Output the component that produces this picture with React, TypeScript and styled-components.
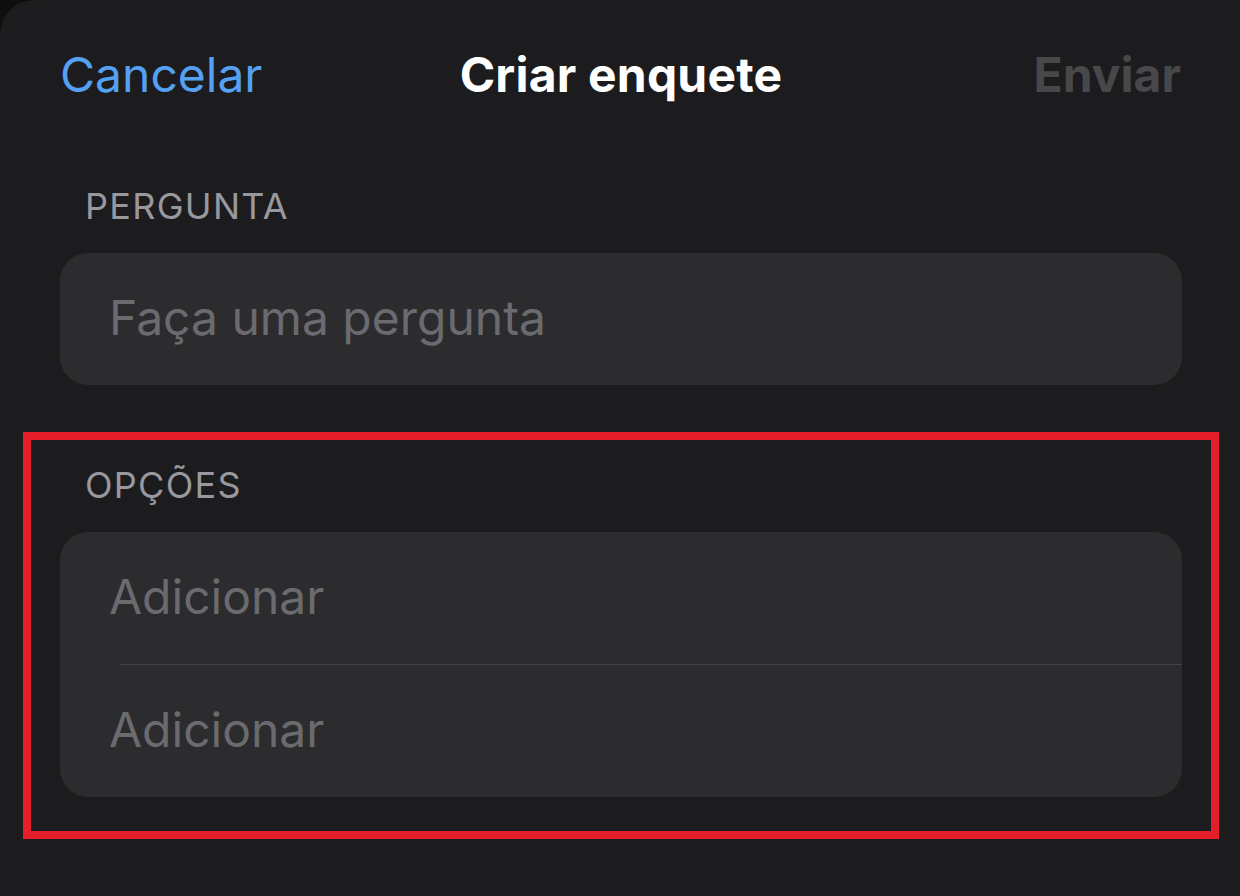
import React from 'react';
import styled, { createGlobalStyle } from 'styled-components';

const GlobalStyle = createGlobalStyle`
    html, body {
        margin: 0;
        padding: 0;
        background: #0e0e0f;
    }
    body {
        font-family: Inter, "Noto Sans", "Liberation Sans", sans-serif;
        -webkit-font-smoothing: antialiased;
    }
`;

const Sheet = styled.div`
    width: 1240px;
    height: 896px;
    box-sizing: border-box;
    background: #1c1c1e;
    border-top-left-radius: 34px;
    padding: 0 58px 0 60px;
    overflow: hidden;
`;

const NavBar = styled.header`
    display: grid;
    grid-template-columns: 1fr auto 1fr;
    align-items: center;
    padding: 46px 0 0;
    margin: 0 0 80px;
    font-size: 48px;
    line-height: 58px;
`;

const NavButton = styled.span<{ $bold?: boolean; $color: string; $align: 'left' | 'right' }>`
    color: ${p => p.$color};
    font-weight: ${p => (p.$bold ? 700 : 400)};
    justify-self: ${p => (p.$align === 'left' ? 'start' : 'end')};
    padding: ${p => (p.$align === 'left' ? '0 0 0 0' : '0 1px 0 0')};
`;

const Title = styled.h1`
    margin: 0;
    font-size: 48px;
    line-height: 58px;
    font-weight: 700;
    color: #ffffff;
    letter-spacing: 0.2px;
`;

const Section = styled.section<{ $highlight?: boolean }>`
    display: flex;
    flex-direction: column;
    ${p =>
        p.$highlight &&
        `
        margin: 47px -37px 0;
        padding: 23px 29px 34px;
        border: 8px solid #e61e29;
    `}
`;

const Label = styled.div`
    font-size: 36px;
    line-height: 44px;
    color: #98989e;
    padding-left: 25px;
    margin-bottom: 25px;
    letter-spacing: 1.3px;
`;

const Card = styled.div`
    background: #2c2c2e;
    border-radius: 28px;
    overflow: hidden;
    display: flex;
    flex-direction: column;
`;

const Field = styled.div`
    position: relative;
    padding: 36px 0 38px 49px;
    font-size: 48px;
    line-height: 58px;
    color: #6a6a6f;

    & + & {
        border-top: 1px solid transparent;
    }
    & + &::before {
        content: '';
        position: absolute;
        top: -1px;
        left: 60px;
        right: 0;
        height: 1px;
        background: #434346;
    }
`;

export default function App() {
    return (
        <>
            <GlobalStyle />
            <Sheet>
                <NavBar>
                    <NavButton $color="#55a0f3" $align="left">Cancelar</NavButton>
                    <Title>Criar enquete</Title>
                    <NavButton $color="#48484b" $bold $align="right">Enviar</NavButton>
                </NavBar>

                <Section>
                    <Label>PERGUNTA</Label>
                    <Card>
                        <Field>Faça uma pergunta</Field>
                    </Card>
                </Section>

                <Section $highlight>
                    <Label>OPÇÕES</Label>
                    <Card>
                        <Field>Adicionar</Field>
                        <Field>Adicionar</Field>
                    </Card>
                </Section>
            </Sheet>
        </>
    );
}
